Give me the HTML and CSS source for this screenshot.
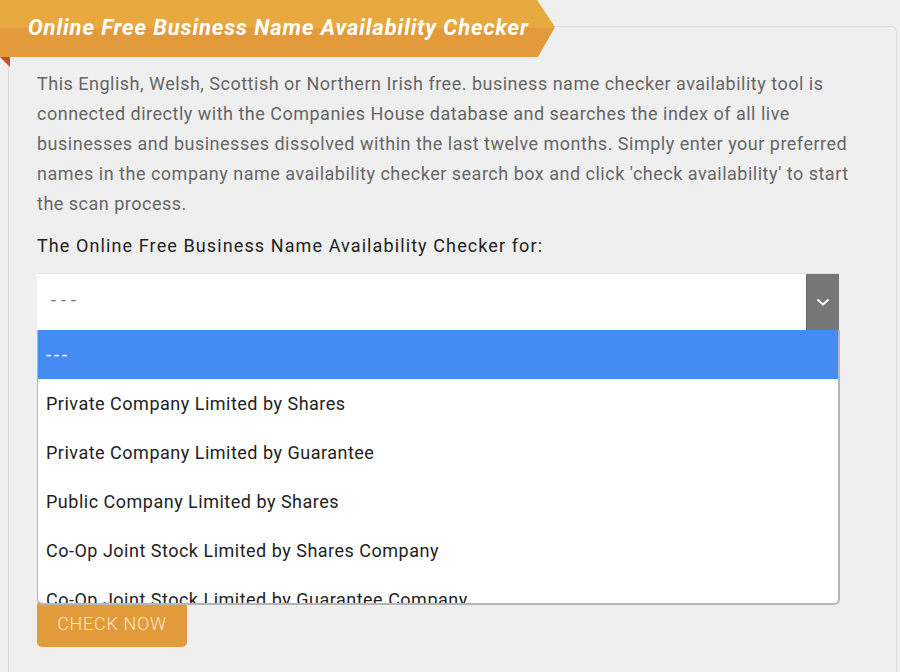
FILE: index.html
```html
<!DOCTYPE html>
<html lang="en">
<head>
    <meta charset="UTF-8">
    <meta name="viewport" content="width=device-width, initial-scale=1.0">
    <title>Online Free Business Name Availability Checker</title>
    <link rel="stylesheet" href="styles.css">
</head>
<body>

<div class="box">
    <div class="ribbon">
        <h1>Online Free Business Name Availability Checker</h1>
    </div>
    <div class="fold"></div>

    <div class="content">
        <p class="intro">This English, Welsh, Scottish or Northern Irish free. business name checker availability tool is connected directly with the Companies House database and searches the index of all live businesses and businesses dissolved within the last twelve months. Simply enter your preferred names in the company name availability checker search box and click 'check availability' to start the scan process.</p>

        <label class="label">The Online Free Business Name Availability Checker for:</label>

        <div class="select">
            <div class="select-value">
                <span class="dashes">---</span>
                <span class="select-arrow">
                    <svg width="14" height="8" viewBox="0 0 14 8"><path d="M1.5 1.5 L7 6.5 L12.5 1.5" fill="none" stroke="#fff" stroke-width="2"/></svg>
                </span>
            </div>
            <ul class="options">
                <li class="active"><span class="dashes">---</span></li>
                <li>Private Company Limited by Shares</li>
                <li>Private Company Limited by Guarantee</li>
                <li>Public Company Limited by Shares</li>
                <li>Co-Op Joint Stock Limited by Shares Company</li>
                <li>Co-Op Joint Stock Limited by Guarantee Company</li>
            </ul>
        </div>

        <div class="name-input"></div>

        <button class="check">CHECK NOW</button>
    </div>
</div>

</body>
</html>
```

FILE: styles.css
```css
body {
    font-family: Roboto, "Open Sans", sans-serif;
    background-color: #efefef;
    margin: 0;
    height: 672px;
    overflow: hidden;
}
.box {
    margin: 26px 3px 0 8px;
    border: 1px solid #dcdcdc;
    border-bottom: none;
    border-radius: 0 6px 0 0;
    height: 646px;
    box-sizing: border-box;
}
.ribbon {
    margin: -27px 0 0 -9px;
    width: 555px;
    height: 57px;
    background: linear-gradient(#e7a940 0, #e7a940 50%, #e39a3a 50%, #e39a3a 100%);
    clip-path: polygon(0 0, 537px 0, 555px 27px, 538px 57px, 0 57px);
    display: flex;
    align-items: center;
}
.ribbon h1 {
    margin: 0 0 2px 28px;
    color: #fff;
    font-size: 22px;
    font-style: italic;
    font-weight: bold;
    letter-spacing: 0.9px;
    white-space: nowrap;
}
.fold {
    margin-left: -9px;
    width: 0;
    height: 0;
    border-top: 10px solid #c2521f;
    border-left: 10px solid transparent;
}
.content {
    padding: 2px 34px 0 28px;
}
.intro {
    margin: 0;
    font-size: 18px;
    line-height: 30px;
    letter-spacing: 0.5px;
    color: #666;
}
.label {
    display: block;
    margin-top: 12px;
    font-size: 18px;
    line-height: 30px;
    letter-spacing: 1.1px;
    color: #222;
}
.select {
    position: relative;
    margin: 12px 23px 0 0;
}
.select-value {
    display: flex;
    justify-content: space-between;
    height: 57px;
    background-color: #fff;
    border-top: 1px solid #e2e2e2;
    box-sizing: border-box;
    font-size: 18px;
    color: #777;
}
.select-value .dashes {
    padding: 15px 0 0 14px;
    letter-spacing: 5px;
}
.dashes {
    letter-spacing: 3px;
}
.select-arrow {
    width: 32px;
    background-color: #777;
    border-left: 1px solid #666;
    display: flex;
    align-items: center;
    justify-content: center;
}
.options {
    position: absolute;
    top: 57px;
    left: 0;
    right: -1px;
    height: 273px;
    margin: 0;
    padding: 0;
    list-style: none;
    overflow: hidden;
    background-color: #fff;
    border: 1px solid #b5b5b5;
    border-top: none;
    border-width: 0 2px 2px 1px;
    border-radius: 0 0 6px 6px;
    z-index: 2;
}
.options li {
    height: 49px;
    line-height: 49px;
    padding-left: 8px;
    font-size: 18px;
    letter-spacing: 0.5px;
    color: #222;
    white-space: nowrap;
}
.options li.active {
    background-color: #448cf4;
    color: #fff;
}
.name-input {
    margin: 55px 23px 0 0;
    height: 55px;
    background-color: #fff;
    border-right: 2px solid #d5d5d5;
}
.check {
    margin-top: 160px;
    width: 150px;
    height: 47px;
    border: none;
    border-radius: 5px;
    background-color: #e39a3a;
    color: #fde7c6;
    font-family: Roboto, sans-serif;
    font-size: 18px;
    font-weight: 300;
    letter-spacing: 0.7px;
}
```
